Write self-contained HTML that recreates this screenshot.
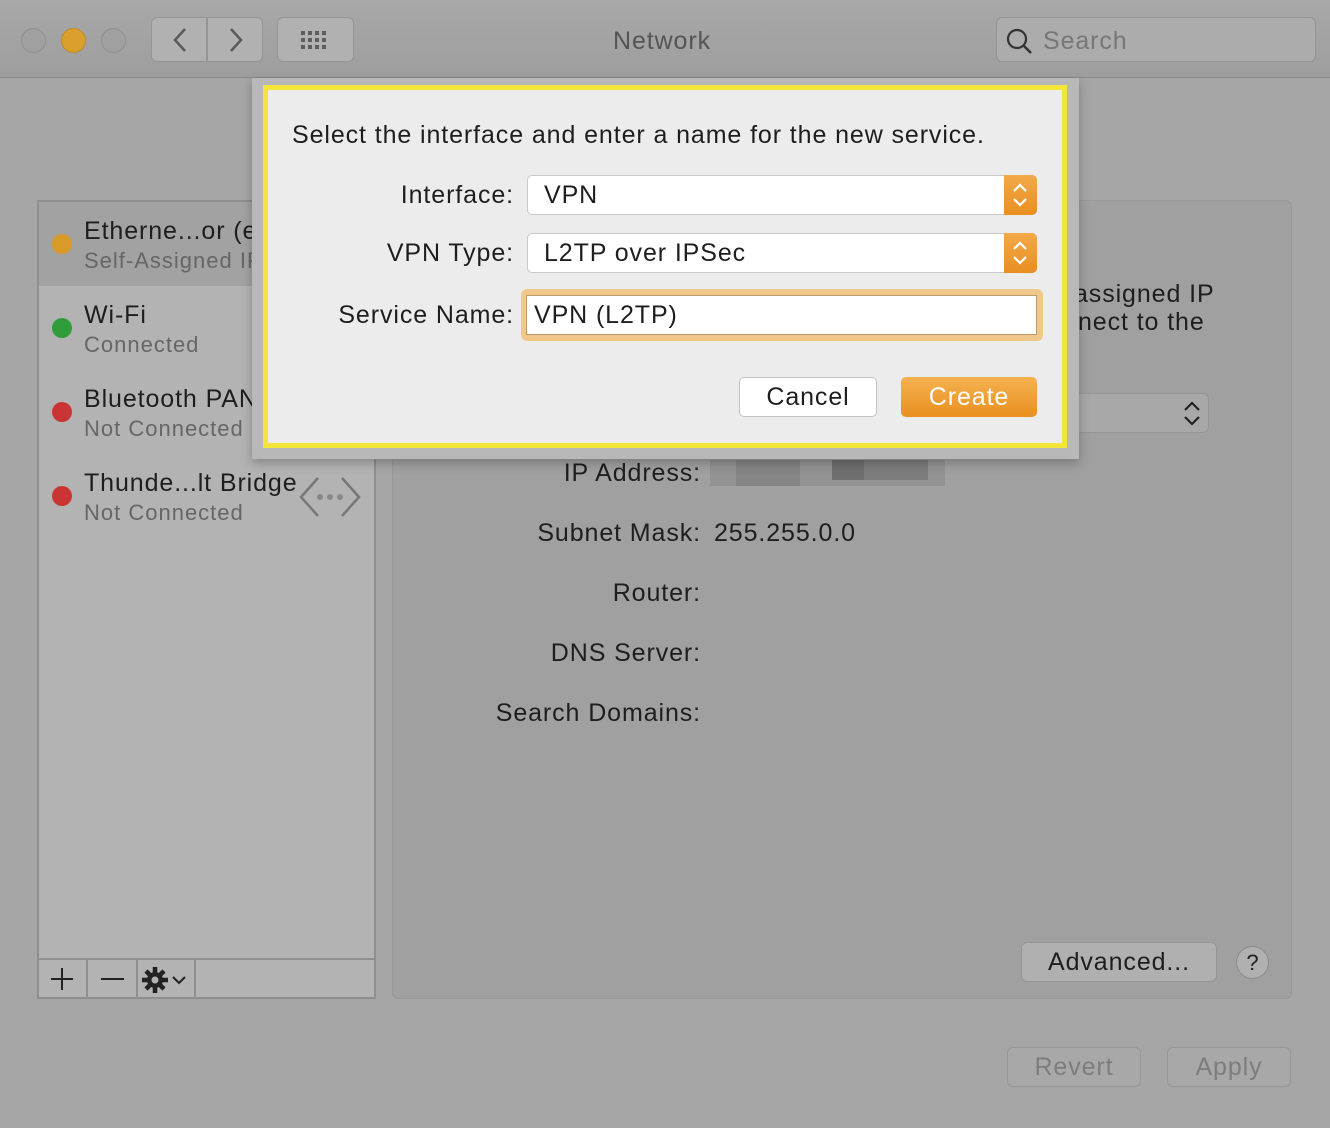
<!DOCTYPE html>
<html><head><meta charset="utf-8"><style>
*{margin:0;padding:0;box-sizing:border-box}
body{width:1330px;height:1128px;background:#a6a6a6;font-family:"Liberation Sans",sans-serif;position:relative;overflow:hidden;color:#1e1e1e}
.a{position:absolute}
.tb{left:0;top:0;width:1330px;height:78px;background:linear-gradient(#a8a8a8,#9e9e9e);border-bottom:1px solid #8a8a8a}
.dot{width:25px;height:25px;border-radius:50%;top:28px;border:1px solid #8e8e8e;background:#a0a0a0}
.btn{background:#b1b1b1;border:1px solid #959595;border-radius:6px}
.t{font-size:25px;letter-spacing:0.9px;white-space:nowrap}
.lbl{font-size:25px;letter-spacing:0.9px;text-align:right;white-space:nowrap}
.s{font-size:22px;letter-spacing:1px}
.sd{width:20px;height:20px;border-radius:50%}
</style></head><body>
<div class="a tb"></div>
<div class="a dot" style="left:21px"></div>
<div class="a dot" style="left:61px;background:#d9a02e;border-color:#c08a25"></div>
<div class="a dot" style="left:101px"></div>
<div class="a btn" style="left:151px;top:17px;width:56px;height:45px;border-radius:6px 0 0 6px"></div>
<div class="a btn" style="left:207px;top:17px;width:56px;height:45px;border-radius:0 6px 6px 0"></div>
<svg class="a" style="left:151px;top:17px" width="112" height="45"><path d="M34 12 L24 23 L34 34" stroke="#5a5a5a" stroke-width="2.5" fill="none"/><path d="M80 12 L90 23 L80 34" stroke="#5a5a5a" stroke-width="2.5" fill="none"/></svg>
<div class="a btn" style="left:277px;top:17px;width:77px;height:45px"></div>
<svg class="a" style="left:300px;top:30px" width="32" height="22"><g fill="#5e5e5e"><rect x="1" y="1" width="4" height="4"/><rect x="8" y="1" width="4" height="4"/><rect x="15" y="1" width="4" height="4"/><rect x="22" y="1" width="4" height="4"/><rect x="1" y="8" width="4" height="4"/><rect x="8" y="8" width="4" height="4"/><rect x="15" y="8" width="4" height="4"/><rect x="22" y="8" width="4" height="4"/><rect x="1" y="15" width="4" height="4"/><rect x="8" y="15" width="4" height="4"/><rect x="15" y="15" width="4" height="4"/><rect x="22" y="15" width="4" height="4"/></g></svg>
<div class="a t" style="left:613px;top:27px;color:#555">Network</div>
<div class="a btn" style="left:996px;top:17px;width:320px;height:45px;background:#acacac"></div>
<svg class="a" style="left:1005px;top:27px" width="30" height="30"><circle cx="12" cy="12" r="9" stroke="#333" stroke-width="2.2" fill="none"/><path d="M18.5 18.5 L26 26" stroke="#333" stroke-width="2.5"/></svg>
<div class="a t" style="left:1043px;top:27px;color:#777">Search</div>

<!-- sidebar -->
<div class="a" style="left:37px;top:200px;width:339px;height:799px;background:#b3b3b3;border:2px solid #8f8f8f"></div>
<div class="a" style="left:39px;top:202px;width:335px;height:84px;background:#a2a2a2"></div>
<div class="a sd" style="left:52px;top:234px;background:#d99a2a"></div>
<div class="a t" style="left:84px;top:217px">Etherne...or (e</div>
<div class="a t s" style="left:84px;top:248px;color:#666">Self-Assigned IP</div>
<div class="a sd" style="left:52px;top:318px;background:#2e9d3a"></div>
<div class="a t" style="left:84px;top:301px">Wi-Fi</div>
<div class="a t s" style="left:84px;top:332px;color:#666">Connected</div>
<div class="a sd" style="left:52px;top:402px;background:#c93434"></div>
<div class="a t" style="left:84px;top:385px">Bluetooth PAN</div>
<div class="a t s" style="left:84px;top:416px;color:#666">Not Connected</div>
<div class="a sd" style="left:52px;top:486px;background:#c93434"></div>
<div class="a t" style="left:84px;top:469px">Thunde...lt Bridge</div>
<div class="a t s" style="left:84px;top:500px;color:#666">Not Connected</div>
<svg class="a" style="left:298px;top:474px" width="64" height="46"><path d="M20 4 L3 23 L20 42 M44 4 L61 23 L44 42" stroke="#777" stroke-width="2.5" fill="none"/><circle cx="22" cy="23" r="3" fill="#888"/><circle cx="32" cy="23" r="3" fill="#888"/><circle cx="42" cy="23" r="3" fill="#888"/></svg>
<div class="a" style="left:39px;top:958px;width:335px;height:2px;background:#8f8f8f"></div>
<div class="a" style="left:86px;top:960px;width:2px;height:38px;background:#8f8f8f"></div>
<div class="a" style="left:136px;top:960px;width:2px;height:38px;background:#8f8f8f"></div>
<div class="a" style="left:194px;top:960px;width:2px;height:38px;background:#8f8f8f"></div>
<svg class="a" style="left:39px;top:960px" width="160" height="38"><path d="M23 8 V30 M12 19 H34" stroke="#222" stroke-width="2"/><path d="M62 19 H85" stroke="#222" stroke-width="2"/><g transform="translate(116 20)" fill="#222"><circle r="8"/><g stroke="#222" stroke-width="4.5"><path d="M0 -13 V13 M-13 0 H13 M-9 -9 L9 9 M-9 9 L9 -9"/></g><circle r="3.5" fill="#b3b3b3"/></g><path d="M134 17 L140 23 L146 17" stroke="#222" stroke-width="2" fill="none"/></svg>

<!-- right panel -->
<div class="a" style="left:392px;top:200px;width:900px;height:799px;background:#a0a0a0;border:1px solid #989898;border-radius:6px"></div>
<div class="a t" style="left:1074px;top:280px">assigned IP</div>
<div class="a t" style="left:1078px;top:308px">nect to the</div>
<div class="a btn" style="left:1070px;top:393px;width:139px;height:40px;background:#a8a8a8"></div>
<svg class="a" style="left:1180px;top:400px" width="24" height="28"><path d="M5 10 L12 3 L19 10 M5 17 L12 24 L19 17" stroke="#222" stroke-width="2.2" fill="none"/></svg>
<div class="a lbl" style="left:400px;width:301px;top:459px">IP Address:</div>
<div class="a" style="left:710px;top:460px;width:235px;height:26px;background:#939393"></div>
<div class="a" style="left:736px;top:460px;width:64px;height:26px;background:#858585"></div>
<div class="a" style="left:832px;top:460px;width:32px;height:20px;background:#6f6f6f"></div>
<div class="a" style="left:864px;top:460px;width:64px;height:20px;background:#7d7d7d"></div>
<div class="a lbl" style="left:400px;width:301px;top:519px">Subnet Mask:</div>
<div class="a t" style="left:714px;top:519px">255.255.0.0</div>
<div class="a lbl" style="left:400px;width:301px;top:579px">Router:</div>
<div class="a lbl" style="left:400px;width:301px;top:639px">DNS Server:</div>
<div class="a lbl" style="left:400px;width:301px;top:699px">Search Domains:</div>
<div class="a btn" style="left:1021px;top:942px;width:196px;height:40px;background:#b0b0b0"></div>
<div class="a t" style="left:1021px;top:948px;width:196px;text-align:center">Advanced...</div>
<div class="a" style="left:1236px;top:946px;width:33px;height:33px;border-radius:50%;background:#b0b0b0;border:1px solid #8a8a8a;font-size:22px;text-align:center;line-height:31px">?</div>
<div class="a btn" style="left:1007px;top:1047px;width:134px;height:40px;background:#a8a8a8;border-color:#979797"></div>
<div class="a t" style="left:1007px;top:1053px;width:134px;text-align:center;color:#7d7d7d">Revert</div>
<div class="a btn" style="left:1167px;top:1047px;width:124px;height:40px;background:#a8a8a8;border-color:#979797"></div>
<div class="a t" style="left:1167px;top:1053px;width:124px;text-align:center;color:#7d7d7d">Apply</div>

<!-- dialog -->
<div class="a" style="left:252px;top:78px;width:827px;height:381px;background:#b8b8b8;box-shadow:0 4px 10px rgba(0,0,0,.25)"></div>
<div class="a" style="left:263px;top:85px;width:804px;height:363px;background:#ececec;border:5px solid #f3e53b"></div>
<div class="a t" style="left:292px;top:121px">Select the interface and enter a name for the new service.</div>
<div class="a lbl" style="left:290px;width:224px;top:181px">Interface:</div>
<div class="a" style="left:527px;top:175px;width:510px;height:40px;background:#fff;border:1px solid #c8c8c8;border-radius:5px"></div>
<div class="a t" style="left:544px;top:181px">VPN</div>
<div class="a" style="left:1004px;top:175px;width:33px;height:40px;background:linear-gradient(#f2a94a,#e88f1f);border-radius:0 5px 5px 0"></div>
<svg class="a" style="left:1008px;top:180px" width="24" height="30"><path d="M6 11 L12 5 L18 11 M6 19 L12 25 L18 19" stroke="#fff" stroke-width="2.2" fill="none"/></svg>
<div class="a lbl" style="left:290px;width:224px;top:239px">VPN Type:</div>
<div class="a" style="left:527px;top:233px;width:510px;height:40px;background:#fff;border:1px solid #c8c8c8;border-radius:5px"></div>
<div class="a t" style="left:544px;top:239px">L2TP over IPSec</div>
<div class="a" style="left:1004px;top:233px;width:33px;height:40px;background:linear-gradient(#f2a94a,#e88f1f);border-radius:0 5px 5px 0"></div>
<svg class="a" style="left:1008px;top:238px" width="24" height="30"><path d="M6 11 L12 5 L18 11 M6 19 L12 25 L18 19" stroke="#fff" stroke-width="2.2" fill="none"/></svg>
<div class="a lbl" style="left:290px;width:224px;top:301px">Service Name:</div>
<div class="a" style="left:521px;top:289px;width:522px;height:52px;background:#f0c98a;border-radius:6px"></div>
<div class="a" style="left:526px;top:295px;width:511px;height:40px;background:#fff;border:1px solid #b99a6a"></div>
<div class="a t" style="left:534px;top:301px">VPN (L2TP)</div>
<div class="a" style="left:739px;top:377px;width:138px;height:40px;background:#fff;border:1px solid #c4c4c4;border-radius:5px"></div>
<div class="a t" style="left:739px;top:383px;width:138px;text-align:center">Cancel</div>
<div class="a" style="left:901px;top:377px;width:136px;height:40px;background:linear-gradient(#f5b251,#e9901f);border-radius:5px"></div>
<div class="a t" style="left:901px;top:383px;width:136px;text-align:center;color:#fff">Create</div>
</body></html>
